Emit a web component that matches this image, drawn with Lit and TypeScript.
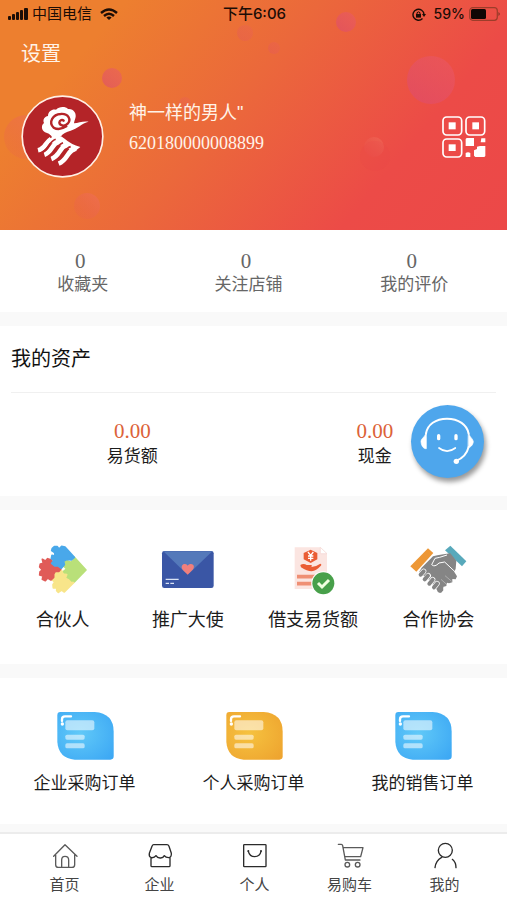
import { LitElement, html, svg, css } from "lit";
import { customElement } from "lit/decorators.js";

const puzzle = svg`<svg class="feature-icon" viewBox="39 45 174 150" aria-hidden="true">
  <g stroke-width="5" stroke-linejoin="round">
    <path fill="#b9e079" stroke="#b9e079" d="M160 82L195 120L160 156L152 148L153 157L142 148L132 146L136 136L126 126L137 117L126 106L128 94L139 92L149 97L156 92Z"/>
    <path fill="#f8e58a" stroke="#f8e58a" d="M108 116L122 122L126 132L137 134L133 145L143 150L150 158L158 158L130 186L122 180L112 187L107 182L108 173L97 174L96 164L101 156L92 148L100 138L97 130L107 128Z"/>
    <path fill="#e05b58" stroke="#e05b58" d="M64 88L73 93L80 86L92 90L96 102L103 109L114 108L120 116L114 124L103 124L98 132L98 142L90 150L80 144L73 152L64 148L66 138L56 135L57 126L64 120L56 111L58 102L67 100Z"/>
    <path fill="#49a8ea" stroke="#49a8ea" d="M100 50L109 50L114 57L122 49L132 51L160 82L151 90L138 88L128 94L130 104L121 115L112 108L101 108L92 100L99 92L91 86L93 76L102 78L101 68L92 62L94 55Z"/>
  </g>
</svg>`;

const envelope = svg`<svg class="feature-icon" viewBox="417 45 174 150" aria-hidden="true">
  <rect x="426" y="63" width="155" height="111" rx="7" fill="#3a56a5"/>
  <path d="M430 64H577L512 126Q503 134 494 126Z" fill="#5479ba"/>
  <path d="M503 134L488 119C481 109 488 101 495 102C500 102 503 107 503 107C503 107 507 102 512 102C520 101 526 110 518 119Z" fill="#f07f7c"/>
  <path d="M437 148H476M437 160H447M451 160H462" stroke="#dbe4f5" stroke-width="4"/>
</svg>`;

const loan = svg`<svg class="feature-icon" viewBox="75 45 174 150" aria-hidden="true">
  <path d="M107 52H184L204 71V177H107Z" fill="#fbe5e1"/>
  <path d="M184 52L204 71H184Z" fill="#fff" stroke="#f5d5d0" stroke-width="2"/>
  <path d="M155 59L175 69V88L155 99L134 88V69Z" fill="#ea5c34"/>
  <path d="M147 66L155 76L163 66M155 76V92M147 78H163M147 85H163" fill="none" stroke="#fff" stroke-width="4"/>
  <path d="M124 105Q134 99 143 105H157Q162 109 154 112Q170 111 184 101Q190 103 184 109Q172 122 158 124Q144 124 126 112Z" fill="#ea5c34"/>
  <path d="M114 140H168M114 161H158" stroke="#ef8f74" stroke-width="11"/>
  <circle cx="193" cy="160" r="36" fill="#fff"/>
  <circle cx="193" cy="160" r="33" fill="#48a04a"/>
  <path d="M177 159L189 171L210 150" fill="none" stroke="#f1ffe0" stroke-width="9"/>
</svg>`;

const handshake = svg`<svg class="feature-icon" viewBox="450 45 174 150" aria-hidden="true">
  <path d="M507 55L523 69L472 125L454 109Z" fill="#ed9736"/>
  <path d="M574 47L622 94L609 109L558 61Z" fill="#58a9bb"/>
  <path d="M488 113L522 79L535 76L553 73L574 70L592 92L590 116L586 126L594 139L590 148L580 147L580 157L570 160L564 158L562 168L552 171L553 181L546 189L538 185L512 151L480 127Z" fill="#858585"/>
  <path d="M518 104L528 85L542 82L564 75M518 104Q527 113 540 99L557 96L592 129" fill="none" stroke="#fff" stroke-width="3" stroke-linejoin="round"/>
  <path d="M494 124L482 137M508 137L496 150M521 149L510 163M534 161L523 175" stroke="#fff" stroke-width="16" stroke-linecap="round"/>
  <path d="M494 124L485 134M507 137L497 148M521 149L511 161M534 161L525 172M547 173L541 182" stroke="#858585" stroke-width="12" stroke-linecap="round"/>
  <path d="M558 137L578 154M546 148L566 166" stroke="#fff" stroke-width="1"/>
</svg>`;

const orderIcon = (tone: string) => svg`<svg class="order-icon" viewBox="106 32 180 162" aria-hidden="true">
  <defs><radialGradient id=${"order-" + tone} cx="40%" cy="45%" r="75%">
    <stop offset="0" stop-color=${tone === "gold" ? "#f6c23f" : "#60c9f8"}/>
    <stop offset="1" stop-color=${tone === "gold" ? "#eea42f" : "#3da8f4"}/>
  </radialGradient></defs>
  <path d="M122 38H225Q282 42 282 97V171Q282 181 272 181H165Q117 177 113 128V48Q113 38 122 38Z" fill=${"url(#order-" + tone + ")"}/>
  <path d="M127 65V60Q127 51 136 51H154" fill="none" stroke="#fff" stroke-width="7" stroke-linecap="round"/>
  <circle cx="128" cy="74" r="5" fill="#fff"/>
  <g fill="#fff" fill-opacity=".55"><rect x="137" y="63" width="87" height="30" rx="6"/><rect x="137" y="106" width="58" height="15" rx="5"/><rect x="137" y="132" width="58" height="15" rx="5"/></g>
</svg>`;

const homeIcon = svg`<svg class="tab-icon" viewBox="150 48 84 84" aria-hidden="true">
  <path d="M158 94L192 59L228 94M164 90V119Q164 127 172 127H213Q221 127 221 119V90M182 127V105Q182 94 192 94Q203 94 203 105V127"/>
</svg>`;
const storeIcon = svg`<svg class="tab-icon dark" viewBox="435 48 84 84" aria-hidden="true">
  <path d="M458 59H498Q502 59 504 64L511 85Q512 97 503 98Q494 98 490 92Q486 100 477 99Q469 99 465 92Q460 99 451 98Q443 95 445 85L453 64Q455 59 458 59ZM450 99V122Q450 125 453 125H504Q507 125 507 122V98"/>
</svg>`;
const bagIcon = svg`<svg class="tab-icon dark" viewBox="-39 48 84 84" aria-hidden="true">
  <rect x="-31" y="59" width="67" height="66" rx="2"/>
  <path d="M-17 79Q-13 95 2 95Q18 94 21 79"/><circle class="solid" cx="-17" cy="78" r="3"/><circle class="solid" cx="21" cy="78" r="3"/>
</svg>`;
const cartIcon = svg`<svg class="tab-icon" viewBox="246 48 84 84" aria-hidden="true">
  <path d="M253 58H262Q265 58 266 62L274 105H318M267 68H327L320 95H272"/><circle cx="280" cy="119" r="7"/><circle cx="311" cy="119" r="7"/>
</svg>`;
const userIcon = svg`<svg class="tab-icon dark" viewBox="531 48 84 84" aria-hidden="true">
  <circle cx="574" cy="76" r="21"/><path d="M543 128Q545 107 563 97M595 103Q606 112 606 128"/>
</svg>`;

const stats = ["收藏夹", "关注店铺", "我的评价"];
const assets = ["易货额", "现金"];
const features = [
  { label: "合伙人", icon: puzzle },
  { label: "推广大使", icon: envelope },
  { label: "借支易货额", icon: loan },
  { label: "合作协会", icon: handshake },
];
const orders = [
  { label: "企业采购订单", tone: "sky" },
  { label: "个人采购订单", tone: "gold" },
  { label: "我的销售订单", tone: "azure" },
];
const tabs = [
  { label: "首页", icon: homeIcon },
  { label: "企业", icon: storeIcon },
  { label: "个人", icon: bagIcon },
  { label: "易购车", icon: cartIcon },
  { label: "我的", icon: userIcon },
];

@customElement("app-root")
export class AppRoot extends LitElement {
  static styles = css`
    :host {
      display: flex;
      flex-direction: column;
      min-height: 100vh;
      background: #f9f9f9;
      color: #1c1c1c;
      font-family: "Liberation Sans", "Noto Sans CJK SC", sans-serif;
      font-size: 17px;
      line-height: 24px;
    }
    * { box-sizing: border-box; }
    svg { display: block; flex: none; }
    button { padding: 0; border: 0; background: none; color: inherit; font: inherit; cursor: pointer; }
    a { color: inherit; text-decoration: none; }
    h2 { margin: 0; font-weight: 400; }

    .hero {
      position: relative;
      padding-bottom: 52px;
      color: #fff3e8;
      background: linear-gradient(130deg, #ed7f2f 18%, #eb683b 46%, #ec4b47 76%, #ec4848);
    }
    .bubbles { position: absolute; inset: 0; width: 100%; height: 100%; }
    .status {
      position: relative;
      display: grid;
      grid-template-columns: 1fr auto 1fr;
      align-items: center;
      height: 28px;
      padding: 0 6px 0 8px;
      color: #1c0d06;
      font-family: "Inter", "Noto Sans CJK SC", sans-serif;
      font-size: 15px;
    }
    .group { display: flex; align-items: center; gap: 4px; }
    .group.end { justify-content: flex-end; }
    .carrier { margin-right: 4px; }
    .time { font-weight: 500; }
    .charge { margin-left: 4px; font-size: 14px; font-weight: 500; }
    .settings { position: relative; display: block; margin: 12px 0 0 21px; font-size: 20px; line-height: 28px; }
    .profile {
      position: relative;
      display: flex;
      align-items: center;
      margin-top: 27px;
      padding: 0 21px;
    }
    .avatar { width: 83px; height: 83px; }
    .identity { flex: 1; margin: 0 0 18px 25px; font-size: 18px; line-height: 30px; }
    .account { font-family: "Liberation Serif", serif; }
    .qr { width: 44px; height: 42px; }

    .panel { background: #fff; margin-bottom: 14px; }
    .stats { display: grid; grid-template-columns: repeat(3, 1fr); padding: 19px 10px 16px 0; color: #666; }
    .stat { display: flex; flex-direction: column; align-items: center; line-height: 23px; }
    .count { padding-right: 5px; font: 21px/24px "Liberation Serif", serif; }

    .assets { position: relative; padding: 0 11px; }
    .title { padding: 19px 0 19px; border-bottom: 1px solid #f0f0f0; font-size: 20px; line-height: 28px; color: #111; }
    .asset-row { display: grid; grid-template-columns: repeat(2, 1fr); padding: 26px 0 27px; }
    .asset { display: flex; flex-direction: column; align-items: center; line-height: 25px; }
    .amount { color: #dc6238; font: 21px/25px "Liberation Serif", serif; }
    .service {
      position: absolute;
      top: 79px;
      right: 23px;
      width: 73px;
      height: 73px;
      border-radius: 50%;
      background: #4ea6ec;
      box-shadow: 2px 4px 5px rgba(0, 0, 0, 0.4);
    }

    .features { display: grid; grid-template-columns: repeat(4, 1fr); padding: 35px 6px 32px 0; font-size: 18px; }
    .orders { display: grid; grid-template-columns: repeat(3, 1fr); padding: 32px 0 28px; }
    .entry { display: flex; flex-direction: column; align-items: center; }
    .feature-icon { width: 58px; height: 50px; margin-bottom: 13px; }
    .order-icon { width: 60px; height: 54px; margin-bottom: 8px; }
    .panel.orders { margin-bottom: 8px; }

    .tabs {
      display: grid;
      grid-template-columns: repeat(5, 1fr);
      margin-top: auto;
      padding: 7px 15px 4px 17px;
      border-top: 2px solid #ececec;
      background: #fff;
      color: #444;
      font-size: 15px;
    }
    .tab { display: flex; flex-direction: column; align-items: center; gap: 4px; }
    .tab-icon { width: 28px; height: 28px; fill: none; stroke: #5a5a5a; stroke-width: 4; stroke-linecap: round; stroke-linejoin: round; }
    .dark { stroke: #2b2b2b; }
    .solid { fill: #2b2b2b; stroke: none; }
  `;

  private renderHero() {
    return html`<header class="hero">
      <svg class="bubbles" viewBox="0 0 507 230" preserveAspectRatio="xMidYMid slice" aria-hidden="true">
        <defs>
          <linearGradient id="pink" x1="1" y1="0" x2="0" y2="1"><stop offset="0" stop-color="#ea5a68" stop-opacity=".5"/><stop offset="1" stop-color="#dc4a70" stop-opacity=".6"/></linearGradient>
          <linearGradient id="fade" x1="1" y1="0" x2="0" y2="1"><stop offset="0" stop-color="#f0705c" stop-opacity=".6"/><stop offset="1" stop-color="#e85550" stop-opacity=".1"/></linearGradient>
        </defs>
        <circle cx="431" cy="80" r="24" fill="url(#pink)"/>
        <circle cx="346" cy="22" r="10" fill="url(#pink)"/>
        <circle cx="112" cy="78" r="10" fill="url(#pink)"/>
        <circle cx="245" cy="33" r="8" fill="url(#pink)" opacity=".4"/>
        <circle cx="274" cy="48" r="6" fill="url(#pink)" opacity=".4"/>
        <circle cx="185" cy="103" r="6" fill="url(#pink)" opacity=".4"/>
        <circle cx="26" cy="137" r="22" fill="url(#fade)"/>
        <circle cx="87" cy="206" r="13" fill="url(#fade)"/>
        <circle cx="374" cy="147" r="10" fill="url(#fade)"/>
        <circle cx="375" cy="156" r="15" fill="#e8454c" opacity=".15"/>
      </svg>
      <div class="status">
        <div class="group">
          <svg width="20" height="12" viewBox="0 0 20 12" fill="currentColor" aria-hidden="true">
            <rect x="0" y="8" width="3" height="4" rx="1"/><rect x="4" y="6" width="3" height="6" rx="1"/><rect x="8" y="4" width="3" height="8" rx="1"/><rect x="12" y="2" width="3" height="10" rx="1"/><rect x="16" y="0" width="4" height="12" rx="1"/>
          </svg>
          <span class="carrier">中国电信</span>
          <svg width="18" height="13" viewBox="0 0 18 13" fill="none" stroke="currentColor" stroke-width="2.4" aria-hidden="true">
            <path d="M1 5Q9 -2 17 5M4 8Q9 3.5 14 8"/><path d="M9 12L6.4 9.6Q9 7.6 11.6 9.6Z" fill="currentColor" stroke="none"/>
          </svg>
        </div>
        <span class="time">下午6:06</span>
        <div class="group end">
          <svg width="14" height="13" viewBox="0 0 14 13" fill="none" stroke="currentColor" stroke-width="1.4" aria-hidden="true">
            <path d="M10.500 10.500A5.500 5.500 0 1 1 12 6.500"/><path d="M10 6H14L12 9Z" fill="currentColor" stroke="none"/><rect x="4" y="6" width="5" height="3.600" fill="currentColor" stroke="none"/><path d="M5 6V4.700Q6.500 3 8 4.700V6" stroke-width="1"/>
          </svg>
          <span class="charge">59%</span>
          <svg width="32" height="14" viewBox="0 0 32 14" aria-hidden="true">
            <rect x=".7" y=".7" width="27.600" height="12.600" rx="3" fill="none" stroke="#9c3d2a" stroke-width="1.200"/><rect x="2" y="2" width="15" height="10" rx="1.500" fill="#100604"/><path d="M29.500 5Q32 7 29.500 9Z" fill="#7d2f20"/>
          </svg>
        </div>
      </div>
      <button class="settings">设置</button>
      <div class="profile">
        <svg class="avatar" viewBox="62 286 249 249" role="img" aria-label="头像">
          <circle cx="186.500" cy="410.500" r="121" fill="#b42428" stroke="#fff0e6" stroke-width="5"/>
          <path fill="#fff" d="M158 420C155 407 145 401 134 398C123 391 122 377 131 370C126 359 134 350 143 349C143 334 157 327 167 330C176 320 196 320 203 328C219 326 230 341 225 356C223 362 222 366 221 371C235 370 248 363 265 366C244 371 231 387 211 393C198 397 187 402 182 410Z"/>
          <path fill="none" stroke="#b42428" stroke-width="7" stroke-linecap="round" d="M160 384C143 367 158 344 181 343C205 341 213 360 202 372C193 381 177 379 177 368C178 361 186 359 190 363M160 384C172 391 187 387 198 380"/>
          <path fill="#fff" d="M156 412Q178 402 193 417Q212 434 240 442L222 456Q190 440 170 434L138 428Q146 416 156 412Z"/>
          <g fill="none" stroke="#fff" stroke-width="14">
            <path d="M152 418C134 428 136 447 113 452"/>
            <path d="M174 427C154 433 156 457 132 465"/>
            <path d="M198 437C177 443 180 468 153 478"/>
            <path d="M228 447C200 450 204 481 175 492"/>
          </g>
          <g fill="none" stroke="#b42428" stroke-width="5">
            <path d="M166 419C143 427 146 453 120 461"/>
            <path d="M188 429C164 438 168 463 140 474"/>
            <path d="M211 441C188 447 192 475 162 487"/>
          </g>
        </svg>
        <div class="identity"><div>神一样的男人"</div><div class="account">620180000008899</div></div>
        <button class="qr" aria-label="二维码">
          <svg width="44" height="42" viewBox="568 348 132 126" fill="#fff" aria-hidden="true">
            <g fill="none" stroke="#fff" stroke-width="5"><rect x="571" y="351" width="56" height="54" rx="11"/><rect x="640" y="351" width="56" height="54" rx="11"/><rect x="571" y="417" width="56" height="54" rx="11"/></g>
            <rect x="588" y="367" width="21" height="21"/><rect x="659" y="367" width="20" height="21"/><rect x="588" y="433" width="21" height="20"/>
            <path d="M642 414H664V438H639V417ZM686 415H698V427H684ZM682 438H698V468L695 471H668L664 467V451L673 447V440ZM639 459Q646 455 653 459V471H639Z"/>
          </svg>
        </button>
      </div>
    </header>`;
  }

  render() {
    return html`
      ${this.renderHero()}
      <section class="panel stats">
        ${stats.map((label) => html`<a class="stat" href="#"><span class="count">0</span><span>${label}</span></a>`)}
      </section>
      <section class="panel assets">
        <h2 class="title">我的资产</h2>
        <div class="asset-row">
          ${assets.map((label) => html`<div class="asset"><span class="amount">0.00</span><span>${label}</span></div>`)}
        </div>
        <button class="service" aria-label="客服">
          <svg width="73" height="73" viewBox="32 31 219 219" fill="none" stroke="#fff" stroke-width="6" stroke-linecap="round" aria-hidden="true">
            <path d="M77 117C81 90 106 72 140 72C175 72 200 91 205 117M205 157C200 176 188 190 169 198"/>
            <path d="M78 112V162C68 163 62 151 62 139C64 130 74 128 78 112ZM204 112C207 128 217 130 219 141C217 154 209 158 204 159Z" fill="#fff" stroke-width="2"/>
            <path d="M116 160Q140 179 165 160" stroke-width="5"/>
            <path d="M115 123V132M167 123V132" stroke-width="10"/>
            <circle cx="168" cy="200" r="8" fill="#fff" stroke="none"/>
          </svg>
        </button>
      </section>
      <section class="panel features">
        ${features.map((f) => html`<a class="entry" href="#">${f.icon}<span>${f.label}</span></a>`)}
      </section>
      <section class="panel orders">
        ${orders.map((o) => html`<a class="entry" href="#">${orderIcon(o.tone)}<span>${o.label}</span></a>`)}
      </section>
      <nav class="tabs">
        ${tabs.map((t) => html`<a class="tab" href="#">${t.icon}<span>${t.label}</span></a>`)}
      </nav>
    `;
  }
}
